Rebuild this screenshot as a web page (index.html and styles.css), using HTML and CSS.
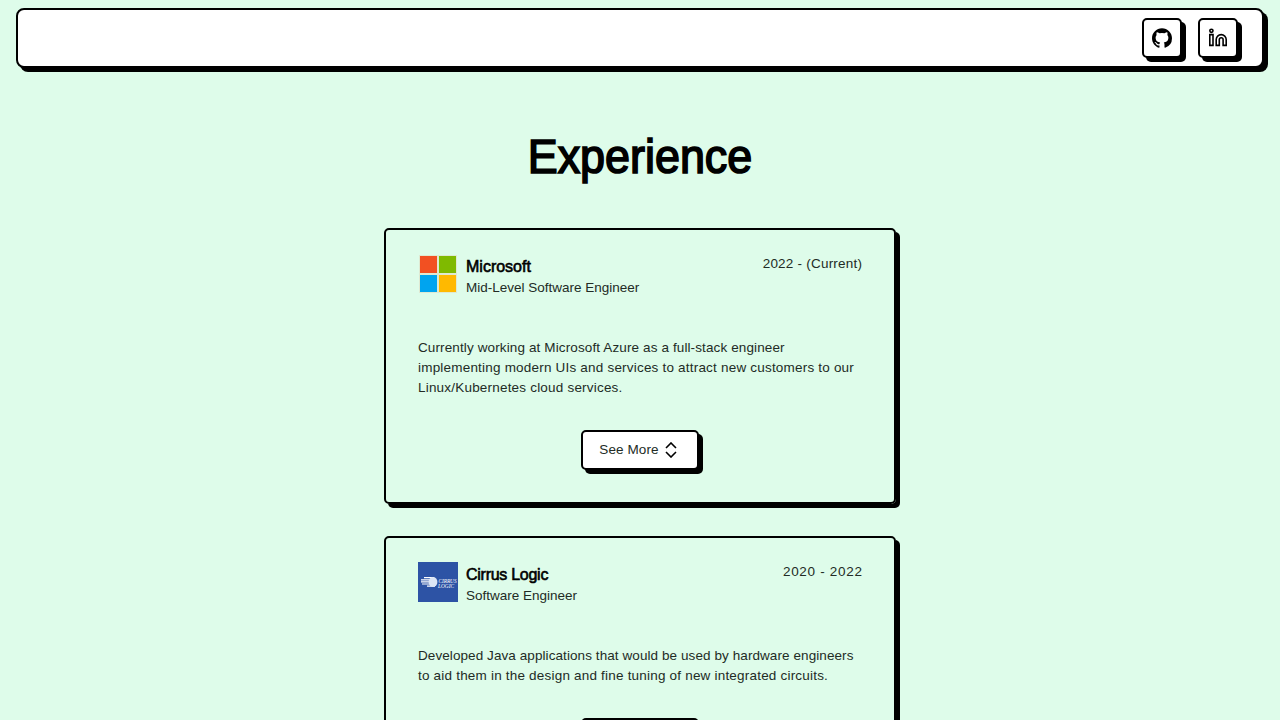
FILE: index.html
```html
<!DOCTYPE html>
<html lang="en">
<head>
<meta charset="utf-8">
<title>Experience</title>
<link rel="stylesheet" href="styles.css">
</head>
<body>
<header class="nav">
  <a class="box icon-button" href="#" aria-label="GitHub"><svg width="20" height="20" viewBox="0 0 24 24"><path d="M12 .3C5.37.3 0 5.67 0 12.2c0 5.3 3.44 9.8 8.2 11.4.6.1.8-.26.8-.58v-2.1c-3.34.73-4.04-1.6-4.04-1.6-.55-1.4-1.33-1.76-1.33-1.76-1.1-.74.08-.73.08-.73 1.2.09 1.84 1.24 1.84 1.24 1.07 1.83 2.8 1.3 3.5 1 .1-.78.41-1.3.75-1.6-2.66-.3-5.46-1.34-5.46-5.94 0-1.3.46-2.38 1.23-3.22-.12-.3-.53-1.52.12-3.17 0 0 1-.32 3.3 1.23a11.5 11.5 0 0 1 6 0c2.3-1.55 3.3-1.23 3.3-1.23.65 1.65.24 2.87.12 3.17.77.84 1.23 1.91 1.23 3.22 0 4.61-2.8 5.63-5.48 5.93.43.37.82 1.1.82 2.22v3.3c0 .32.2.7.82.58A12 12 0 0 0 24 12.2C24 5.67 18.63.3 12 .3z"/></svg></a>
  <a class="box icon-button" href="#" aria-label="LinkedIn"><svg width="20" height="20" viewBox="0 0 20 20" fill="none" stroke="#000" stroke-width="1.6"><circle cx="3.4" cy="2.8" r="1.6"/><path d="M1.8 6.6h3.2v10.8H1.8zM8.2 17.4v-5.8a5 5 0 0 1 10 0v5.8h-3.1v-5.8a1.9 1.9 0 0 0-3.8 0v5.8z"/></svg></a>
</header>
<main class="main">
  <h1 class="title">Experience</h1>
  <section class="card">
    <div class="card-head">
      <svg class="logo" width="40" height="40" viewBox="0 0 40 40"><path fill="#dfe9d2" d="M1 1h38v38H1z"/><path fill="#f25022" d="M2 2h17v17H2z"/><path fill="#7fba00" d="M21 2h17v17H21z"/><path fill="#00a4ef" d="M2 21h17v17H2z"/><path fill="#ffb900" d="M21 21h17v17H21z"/></svg>
      <div class="who"><h2 class="company">Microsoft</h2><p class="role">Mid-Level Software Engineer</p></div>
      <p class="dates">2022 - (Current)</p>
    </div>
    <p class="about"><span class="snug">Currently working at Microsoft Azure as a full-stack engineer</span><br>implementing modern UIs and services to attract new customers to our<br>Linux/Kubernetes cloud services.</p>
    <button class="box more"><span class="more-label">See More</span><svg width="16" height="16" viewBox="0 0 16 16" fill="none" stroke="#000" stroke-width="1.6"><path d="M3 6l5-5 5 5M3 10l5 5 5-5"/></svg></button>
  </section>
  <section class="card">
    <div class="card-head">
      <svg class="logo" width="40" height="40" viewBox="0 0 40 40"><path fill="#2d53a5" d="M0 0h40v40H0z"/><g stroke="#fff" stroke-width="1.2"><path d="M6 15.7h10M3 17.8h13M3 19.9h13M4 22h12M9 24.1h8"/></g><ellipse cx="15" cy="20" rx="4.4" ry="5" fill="#dce5f5"/><text class="logo-text" x="20.5" y="20.6" textLength="18" lengthAdjust="spacingAndGlyphs">CIRRUS</text><text class="logo-text" x="20" y="25.6" textLength="16" lengthAdjust="spacingAndGlyphs">LOGIC</text></svg>
      <div class="who"><h2 class="company company-cirrus">Cirrus Logic</h2><p class="role">Software Engineer</p></div>
      <p class="dates dates-past">2020 - 2022</p>
    </div>
    <p class="about"><span class="tight">Developed Java applications that would be used by hardware engineers</span><br>to aid them in the design and fine tuning of new integrated circuits.</p>
    <button class="box more"><span class="more-label">See More</span><svg width="16" height="16" viewBox="0 0 16 16" fill="none" stroke="#000" stroke-width="1.6"><path d="M3 6l5-5 5 5M3 10l5 5 5-5"/></svg></button>
  </section>
</main>
</body>
</html>
```

FILE: styles.css
```css
* { box-sizing: border-box; margin: 0; }
html { overflow: hidden; }
body { height: 720px; overflow: hidden; background: #defcea; color: #000; font: 13.5px/20px "Liberation Sans", Arial, sans-serif; padding: 8px 16px 0; }
.nav { height: 60px; background: #fff; border: 2px solid #000; border-radius: 8px; box-shadow: 4px 4px 0 #000; display: flex; justify-content: flex-end; align-items: center; gap: 16px; padding-right: 24px; }
.box { height: 40px; background: #fff; border: 2px solid #000; border-radius: 5px; box-shadow: 4px 4px 0 #000; display: flex; align-items: center; justify-content: center; }
.icon-button { width: 40px; }
.main { width: 512px; margin: 0 auto; padding-top: 65px; }
.title { font-size: 47.5px; line-height: 48px; font-weight: 400; text-align: center; -webkit-text-stroke: 1.7px #000; margin-bottom: 47px; transform: scaleX(.945); }
.card { border: 2px solid #000; border-radius: 5px; box-shadow: 4px 4px 0 #000; padding: 24px 32px 32px; margin-bottom: 32px; }
.card-head { display: flex; height: 44px; }
.logo { flex: none; margin-right: 8px; }
.who { flex: 1; padding-top: 3px; }
.company { font-size: 16px; line-height: 20px; font-weight: 400; -webkit-text-stroke: .6px #000; }
.company-cirrus { letter-spacing: -.27px; }
.role, .dates, .about, .more { color: #222b25; }
.role { line-height: 22px; }
.dates { letter-spacing: .22px; margin-right: -.22px; }
.dates-past { letter-spacing: .7px; margin-right: -.7px; }
.about { margin-top: 40px; white-space: nowrap; letter-spacing: .2px; }
.snug { letter-spacing: .12px; }
.tight { letter-spacing: .08px; }
.more { width: 118px; margin: 32px auto 0; padding-right: 8px; gap: 4px; font: inherit; }
.more-label { letter-spacing: .1px; }
.logo-text { font: italic 6px "Liberation Serif", serif; fill: #fff; }
```
